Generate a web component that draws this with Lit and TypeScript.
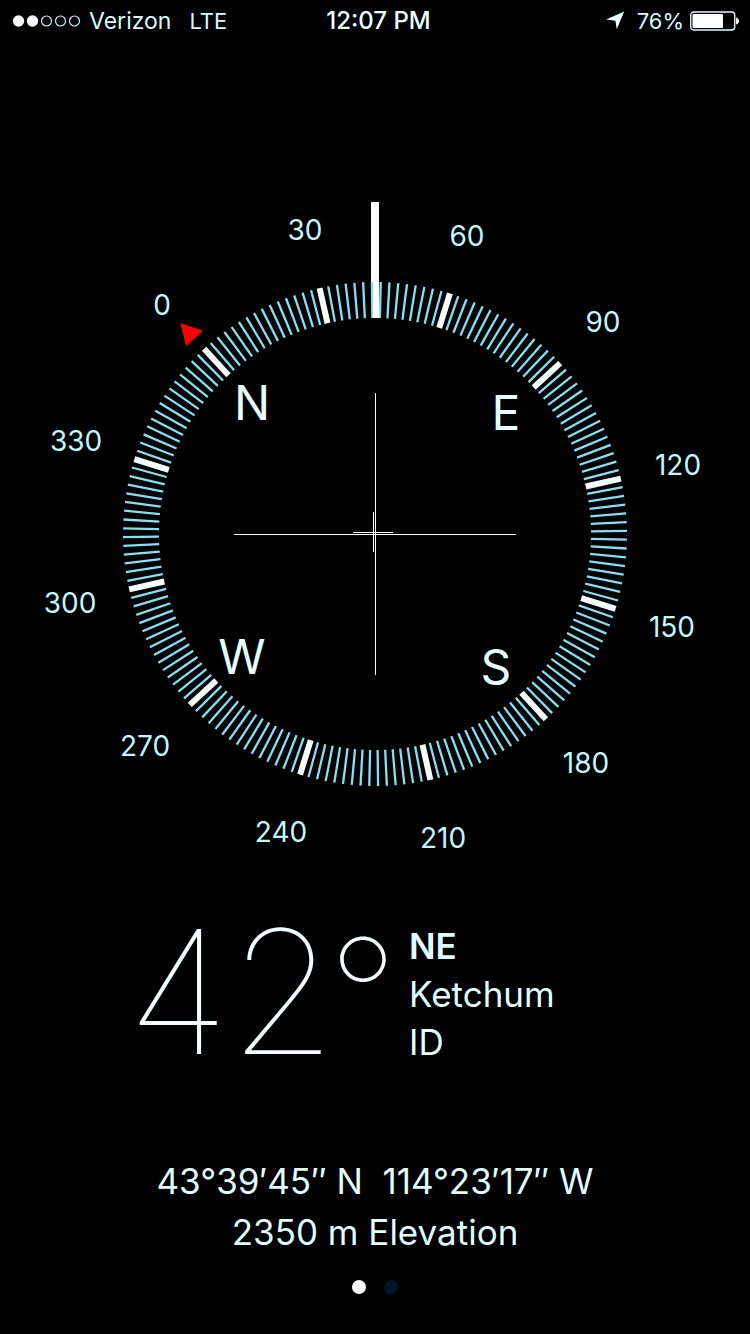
import { LitElement, html, css, svg } from "lit";
import { customElement, state } from "lit/decorators.js";

const range = (n: number) => Array.from({ length: n }, (_, i) => i);

@customElement("compass-status-bar")
class CompassStatusBar extends LitElement {
  static styles = css`
    :host {
      display: grid;
      grid-template-columns: 1fr auto 1fr;
      align-items: center;
      height: 42px;
      padding: 0 11px 0 12px;
      font-size: 23px;
      line-height: 28px;
      color: #d6faff;
      white-space: nowrap;
    }
    .side {
      display: flex;
      align-items: center;
    }
    .right {
      justify-content: flex-end;
      font-size: 22px;
    }
    .signal {
      width: 69px;
      height: 14px;
      margin-right: 8px;
    }
    .network {
      margin-left: 18px;
      font-size: 22px;
    }
    .time {
      padding-left: 6px;
      font-size: 24px;
      font-weight: 500;
      color: #eefeff;
    }
    .arrow {
      width: 20px;
      height: 20px;
      margin-right: 12px;
    }
    .battery {
      width: 49px;
      height: 20px;
      margin-left: 6px;
    }
  `;
  render() {
    return html`
      <div class="side">
        <svg class="signal" viewBox="0 0 69 14" aria-hidden="true">
          ${range(5).map(
            (i) => svg`<circle cx=${6.5 + i * 14} cy="7" r=${i < 2 ? 5.7 : 5}
              fill=${i < 2 ? "#fff" : "none"} stroke=${i < 2 ? "none" : "#c4f2fa"} stroke-width="1.2"/>`
          )}
        </svg>
        <span>Verizon</span><span class="network">LTE</span>
      </div>
      <div class="time">12:07 PM</div>
      <div class="side right">
        <svg class="arrow" viewBox="0 0 20 20" aria-hidden="true">
          <path d="M19.2 .6 L11.8 18.2 L10.4 9.7 L1.2 8.6 Z" fill="#eefeff" />
        </svg>
        <span>76%</span>
        <svg class="battery" viewBox="0 0 49 20" aria-hidden="true">
          <rect x=".75" y="1" width="44" height="18" rx="3" fill="none" stroke="#e8fdff" stroke-width="1.3" />
          <rect x="2.5" y="3" width="30.5" height="14" rx="1" fill="#fff" />
          <path d="M46 6.5 Q49 7.5 49 10 T46 13.5 Z" fill="#e8fdff" />
        </svg>
      </div>
    `;
  }
}

@customElement("compass-dial")
class CompassDial extends LitElement {
  static properties = { heading: { type: Number } };
  declare heading: number;

  static styles = css`
    :host {
      display: block;
    }
    svg {
      display: block;
      width: 100%;
    }
    .minor {
      stroke: #86e0f2;
      stroke-width: 2.3;
    }
    .major {
      stroke: #f2feff;
      stroke-width: 6;
    }
    .label {
      font-size: 28px;
      fill: #c4f6ff;
      text-anchor: middle;
    }
    .cardinal {
      font-size: 48px;
      fill: #e6fdff;
      text-anchor: middle;
    }
    .white {
      fill: #fff;
    }
    .north {
      fill: #ff0000;
    }
  `;

  private place(deg: number, radius: number) {
    const a = ((deg - this.heading) * Math.PI) / 180;
    return { x: Math.round(Math.sin(a) * radius), y: Math.round(-Math.cos(a) * radius) };
  }

  render() {
    const minor = range(180).map((i) => i * 2).filter((d) => d % 30 !== 0);
    const major = range(12).map((i) => i * 30);
    const cardinals = ["N", "E", "S", "W"];
    return html`
      <svg viewBox="-375 -375 750 750" role="img" aria-label="Compass">
        <g transform="rotate(${-this.heading})">
          ${minor.map((d) => svg`<line class="minor" y1="-216" y2="-252" transform="rotate(${d})"/>`)}
          ${major.map((d) => svg`<line class="major" y1="-216" y2="-252" transform="rotate(${d})"/>`)}
          <path class="north" d="M0 -287 L11.5 -266 L-11.5 -266 Z" />
        </g>
        ${major.map((d) => {
          const p = this.place(d, 312);
          return svg`<text class="label" x=${p.x - 1} y=${p.y + 10}>${d}</text>`;
        })}
        ${cardinals.map((c, i) => {
          const p = this.place(i * 90, 180);
          return svg`<text class="cardinal" x=${p.x - 1} y=${p.y + 18}>${c}</text>`;
        })}
        <rect class="white" x="-4" y="-332" width="8" height="80" />
        <rect class="white" x="-2" y="-252" width="6" height="36" />
        <rect class="white" x="-141" y="0" width="282" height="1" />
        <rect class="white" x="0" y="-141" width="1" height="282" />
        <rect class="white" x="-22" y="-2" width="40" height="1" />
        <rect class="white" x="-2" y="-22" width="1" height="40" />
      </svg>
    `;
  }
}

@customElement("app-root")
class AppRoot extends LitElement {
  @state() private page = 0;

  static styles = css`
    :host {
      display: flex;
      flex-direction: column;
      min-height: 100vh;
      background: #000;
      color: #e0fcff;
      font-family: Inter, "Liberation Sans", sans-serif;
    }
    .dial {
      margin-top: 117px;
    }
    .reading {
      display: grid;
      grid-template-columns: 1fr 342px;
      column-gap: 10px;
      align-items: center;
      margin-top: 5px;
    }
    .degrees {
      display: flex;
      justify-content: flex-end;
      align-items: flex-start;
      font-size: 172px;
      line-height: 154px;
      font-weight: 100;
      color: #f4feff;
    }
    .unit {
      margin-left: -8px;
      font-size: 154px;
      line-height: 160px;
    }
    .place {
      font-size: 35px;
      line-height: 48px;
      padding-left: 1px;
    }
    .direction {
      font-weight: 600;
    }
    .position {
      margin-top: 82px;
      font-size: 35px;
      line-height: 51px;
      text-align: center;
    }
    .pages {
      display: flex;
      justify-content: center;
      gap: 18px;
      margin-top: 22px;
    }
    .page {
      width: 14px;
      height: 14px;
      padding: 0;
      border: 0;
      border-radius: 50%;
      background: #02152b;
    }
    .page.current {
      background: #fff;
    }
  `;

  render() {
    return html`
      <compass-status-bar></compass-status-bar>
      <compass-dial class="dial" .heading=${42.7}></compass-dial>
      <div class="reading">
        <div class="degrees"><span>42</span><span class="unit">°</span></div>
        <div class="place">
          <div class="direction">NE</div>
          <div>Ketchum</div>
          <div>ID</div>
        </div>
      </div>
      <div class="position">
        <div>43°39′45″ N&nbsp; 114°23′17″ W</div>
        <div>2350 m Elevation</div>
      </div>
      <nav class="pages">
        ${["Compass", "Level"].map(
          (name, i) => html`<button
            class="page ${this.page === i ? "current" : ""}"
            aria-label=${name}
            @click=${() => (this.page = i)}
          ></button>`
        )}
      </nav>
    `;
  }
}
